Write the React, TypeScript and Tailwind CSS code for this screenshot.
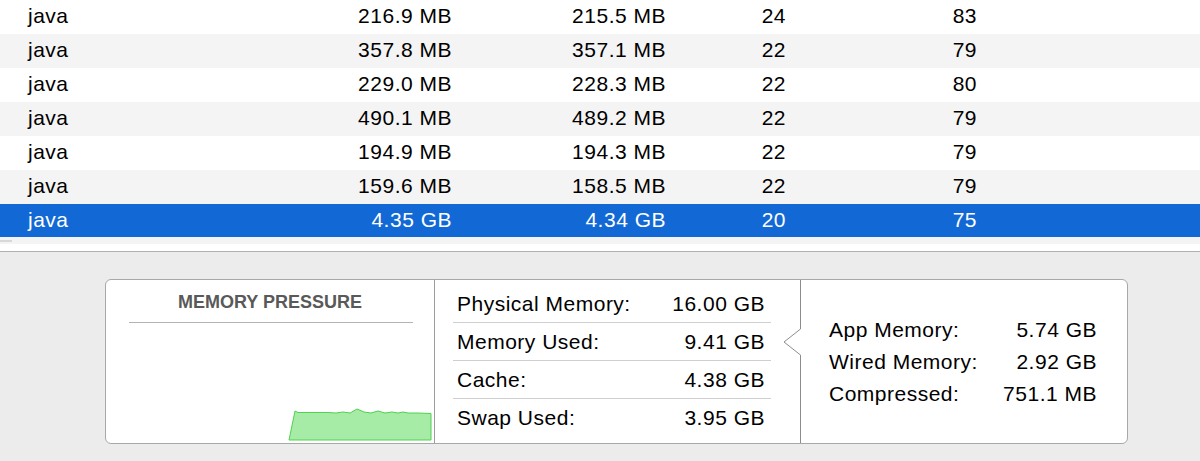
import React from "react";

const ROWS = [
  ["java", "216.9 MB", "215.5 MB", "24", "83"],
  ["java", "357.8 MB", "357.1 MB", "22", "79"],
  ["java", "229.0 MB", "228.3 MB", "22", "80"],
  ["java", "490.1 MB", "489.2 MB", "22", "79"],
  ["java", "194.9 MB", "194.3 MB", "22", "79"],
  ["java", "159.6 MB", "158.5 MB", "22", "79"],
  ["java", "4.35 GB", "4.34 GB", "20", "75"],
];

const STATS = [
  ["Physical Memory:", "16.00 GB"],
  ["Memory Used:", "9.41 GB"],
  ["Cache:", "4.38 GB"],
  ["Swap Used:", "3.95 GB"],
];

const DETAILS = [
  ["App Memory:", "5.74 GB"],
  ["Wired Memory:", "2.92 GB"],
  ["Compressed:", "751.1 MB"],
];

function PressureChart() {
  const top =
    "7,4 10,5.5 25,5.5 40,5.5 48,6 55,5 62,6 69,2 76,5 83,6 90,4 97,6 104,5 110,6 115,5 120,6 130,6 143,6.5";
  return (
    <svg width="145" height="35" viewBox="0 0 145 35">
      <polygon points={`1,33 ${top} 143,33`} fill="#a6eba6" stroke="#4fd24f" strokeWidth="1" />
    </svg>
  );
}

export default function App() {
  return (
    <div
      className="w-[1200px] h-[461px] flex flex-col bg-[#ececec] overflow-hidden text-black tracking-[0.5px]"
      style={{ fontFamily: '"Liberation Sans", Arial, sans-serif' }}
    >
      {/* Process table */}
      <div className="flex flex-col bg-white">
        {ROWS.map((r, i) => {
          const selected = i === ROWS.length - 1;
          const bg = selected ? "bg-[#1268d4] text-white h-[33px]" : i % 2 ? "bg-[#f4f4f4] h-[34px]" : "bg-white h-[34px]";
          return (
            <div key={i} className={`flex items-center text-[21px] leading-none pb-[3px] ${bg}`}>
              <div className="w-[300px] pl-[28px]">{r[0]}</div>
              <div className="w-[152px] text-right">{r[1]}</div>
              <div className="w-[214px] text-right">{r[2]}</div>
              <div className="w-[120px] text-right">{r[3]}</div>
              <div className="w-[191px] text-right">{r[4]}</div>
              <div className="flex-1" />
            </div>
          );
        })}
        <div className="h-[7px] bg-[#f4f4f4] flex items-center">
          <div className="w-[12px] h-[2px] bg-[#d8d8d8]" />
        </div>
        <div className="h-[7px] bg-white" />
      </div>
      <div className="h-px bg-[#b0b0b0]" />

      {/* Memory summary */}
      <div className="pt-[27px] pl-[105px]">
        <div className="w-[1023px] h-[165px] flex border border-[#a8a8a8] rounded-[6px] bg-white">
          <div className="w-[328px] flex flex-col">
            <div className="pt-[12px] text-center text-[18px] font-bold leading-[20px] text-[#595959] tracking-normal">
              MEMORY PRESSURE
            </div>
            <div className="mt-[10px] ml-[23px] mr-[21px] h-px bg-[#b4b4b4]" />
            <div className="flex-1 flex items-end justify-end pr-[1px] pb-[1px]">
              <PressureChart />
            </div>
          </div>

          <div className="w-[366px] border-l border-[#9c9c9c] pt-[5px] pl-[18px] pr-[29px]">
            {STATS.map(([label, value], i) => (
              <div
                key={label}
                className={`h-[38px] flex items-center justify-between pl-[4px] pr-[6px] text-[21px] ${
                  i < STATS.length - 1 ? "border-b border-[#cfcfcf]" : ""
                }`}
              >
                <span>{label}</span>
                <span>{value}</span>
              </div>
            ))}
          </div>

          <div className="relative flex-1 flex flex-col justify-center pl-[29px] pr-[30px]">
            <svg className="absolute left-[-17px] top-0" width="18" height="163" viewBox="0 0 18 163">
              <polyline points="17.5,0 17.5,49 1,62 17.5,75 17.5,163" fill="#ffffff" stroke="#8c8c8c" strokeWidth="1" />
            </svg>
            {DETAILS.map(([label, value]) => (
              <div key={label} className="h-[32px] flex items-center justify-between text-[21px]">
                <span>{label}</span>
                <span>{value}</span>
              </div>
            ))}
          </div>
        </div>
      </div>
    </div>
  );
}
